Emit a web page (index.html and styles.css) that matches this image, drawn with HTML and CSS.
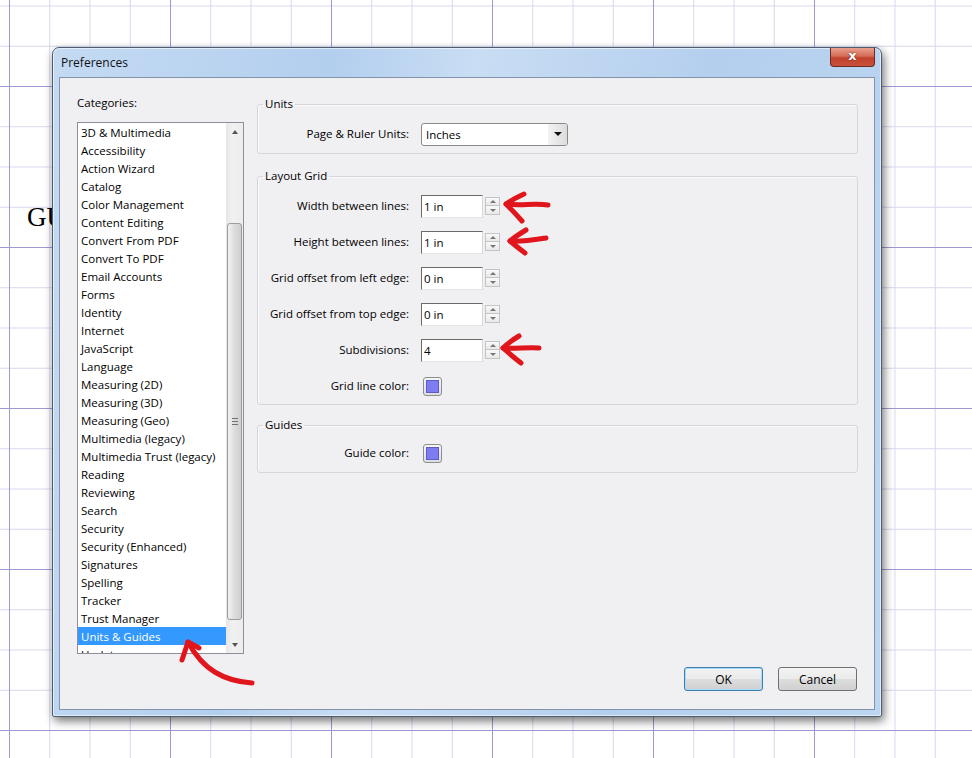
FILE: index.html
```html
<!DOCTYPE html>
<html lang="en">
  <head>
    <meta charset="UTF-8" />
    <link rel="stylesheet" href="styles.css">
    <title>Preferences</title>
  </head>
  <body>
    <div class="desktop">
      <div class="doc-text">GU</div>

      <div class="window">
        <div class="titlebar">
          <span class="title">Preferences</span>
          <div class="close">x</div>
        </div>

        <div class="client">
          <div class="main">
            <div class="categories">
              <div class="cat-label">Categories:</div>
              <div class="listbox">
                <ul class="items">
                  <li>3D &amp; Multimedia</li>
                  <li>Accessibility</li>
                  <li>Action Wizard</li>
                  <li>Catalog</li>
                  <li>Color Management</li>
                  <li>Content Editing</li>
                  <li>Convert From PDF</li>
                  <li>Convert To PDF</li>
                  <li>Email Accounts</li>
                  <li>Forms</li>
                  <li>Identity</li>
                  <li>Internet</li>
                  <li>JavaScript</li>
                  <li>Language</li>
                  <li>Measuring (2D)</li>
                  <li>Measuring (3D)</li>
                  <li>Measuring (Geo)</li>
                  <li>Multimedia (legacy)</li>
                  <li>Multimedia Trust (legacy)</li>
                  <li>Reading</li>
                  <li>Reviewing</li>
                  <li>Search</li>
                  <li>Security</li>
                  <li>Security (Enhanced)</li>
                  <li>Signatures</li>
                  <li>Spelling</li>
                  <li>Tracker</li>
                  <li>Trust Manager</li>
                  <li class="selected">Units &amp; Guides</li>
                  <li>Updater</li>
                </ul>
                <div class="scrollbar">
                  <div class="sb-btn"><span class="tri-up"></span></div>
                  <div class="sb-track">
                    <div class="sb-thumb"><span class="grip"></span></div>
                  </div>
                  <div class="sb-btn"><span class="tri-down"></span></div>
                </div>
              </div>
            </div>

            <div class="panel">
              <fieldset class="group units">
                <legend>Units</legend>
                <div class="row">
                  <label>Page &amp; Ruler Units:</label>
                  <div class="select">
                    <span class="select-text">Inches</span>
                    <span class="select-btn"><span class="tri-down dark"></span></span>
                  </div>
                </div>
              </fieldset>

              <fieldset class="group grid">
                <legend>Layout Grid</legend>
                <div class="row">
                  <label>Width between lines:</label>
                  <div class="field">
                    <span class="input">1 in</span>
                    <span class="spin"><span class="spin-btn"><span class="tri-up small"></span></span><span class="spin-btn"><span class="tri-down small"></span></span></span>
                  </div>
                </div>
                <div class="row">
                  <label>Height between lines:</label>
                  <div class="field">
                    <span class="input">1 in</span>
                    <span class="spin"><span class="spin-btn"><span class="tri-up small"></span></span><span class="spin-btn"><span class="tri-down small"></span></span></span>
                  </div>
                </div>
                <div class="row">
                  <label>Grid offset from left edge:</label>
                  <div class="field">
                    <span class="input">0 in</span>
                    <span class="spin"><span class="spin-btn"><span class="tri-up small"></span></span><span class="spin-btn"><span class="tri-down small"></span></span></span>
                  </div>
                </div>
                <div class="row">
                  <label>Grid offset from top edge:</label>
                  <div class="field">
                    <span class="input">0 in</span>
                    <span class="spin"><span class="spin-btn"><span class="tri-up small"></span></span><span class="spin-btn"><span class="tri-down small"></span></span></span>
                  </div>
                </div>
                <div class="row">
                  <label>Subdivisions:</label>
                  <div class="field">
                    <span class="input">4</span>
                    <span class="spin"><span class="spin-btn"><span class="tri-up small"></span></span><span class="spin-btn"><span class="tri-down small"></span></span></span>
                  </div>
                </div>
                <div class="row">
                  <label>Grid line color:</label>
                  <div class="swatch"><span class="swatch-color"></span></div>
                </div>
              </fieldset>

              <fieldset class="group guides">
                <legend>Guides</legend>
                <div class="row">
                  <label>Guide color:</label>
                  <div class="swatch"><span class="swatch-color"></span></div>
                </div>
              </fieldset>
            </div>
          </div>

          <div class="footer">
            <button class="btn default">OK</button>
            <button class="btn">Cancel</button>
          </div>
        </div>
      </div>

      <!-- hand drawn red marks on top of the screenshot -->
      <svg class="marks" width="972" height="758" viewBox="0 0 972 758">
        <g fill="none" stroke="#e0161c" stroke-width="5" stroke-linecap="round" stroke-linejoin="round">
          <path d="M548 205 C535 203 520 206 506 204" />
          <path d="M524 194 Q513 199 506 204 Q514 212 522 221" />
          <path d="M546 238 C533 240 521 242 510 241" />
          <path d="M526 230 Q516 236 510 241 Q517 247 525 253" />
          <path d="M539 348 C528 347 515 349 503 348" />
          <path d="M519 336 Q509 342 503 348 Q512 356 521 363" />
          <path d="M252 683 C224 681 203 670 188 642" />
          <path d="M182 660 L188 642 L199 648" />
        </g>
      </svg>
    </div>
  </body>
</html>
```

FILE: styles.css
```css
* {
  margin: 0;
  padding: 0;
  box-sizing: border-box;
}

body {
  width: 972px;
  height: 758px;
  overflow: hidden;
  font-family: "Open Sans", "Noto Sans", sans-serif;
  font-size: 11.5px;
  color: #000;
}

.desktop {
  position: relative;
  width: 972px;
  height: 758px;
  background-color: #fff;
  background-image:
    linear-gradient(to right, #9d99d2 1px, transparent 1px),
    linear-gradient(to bottom, #9d99d2 1px, transparent 1px),
    linear-gradient(to right, #d8d6ee 1px, transparent 1px),
    linear-gradient(to bottom, #d8d6ee 1px, transparent 1px);
  background-size: 161px 161px, 161px 161px, 40.25px 40.25px, 40.25px 40.25px;
  background-position: 170px 0, 0 86px, 170px 0, 0 86px;
}

.doc-text {
  position: absolute;
  left: 27px;
  top: 204px;
  font-family: "Liberation Serif", serif;
  font-size: 27px;
  line-height: 27px;
}

/* window */
.window {
  position: absolute;
  left: 52px;
  top: 47px;
  width: 830px;
  height: 670px;
  display: flex;
  flex-direction: column;
  border: 1px solid #4d5d70;
  border-radius: 7px 7px 2px 2px;
  background: linear-gradient(100deg, #c4daf3 0%, #b3cfee 30%, #c9ddf4 45%, #b4cfee 70%, #bcd6f1 100%);
  box-shadow: 2px 4px 10px rgba(0, 0, 0, 0.55), inset 0 0 0 1px rgba(255, 255, 255, 0.55);
}

.titlebar {
  display: flex;
  align-items: flex-start;
  height: 29px;
  padding-left: 8px;
}

.title {
  margin-top: 7px;
  line-height: 16px;
  font-size: 12px;
  color: #111;
}

.close {
  margin-left: auto;
  margin-right: 6px;
  width: 45px;
  height: 19px;
  border: 1px solid #6b2a25;
  border-top: none;
  border-radius: 0 0 4px 4px;
  background: linear-gradient(#e9a08f 0%, #d56c58 45%, #c1412c 55%, #c9503a 100%);
  color: #fff;
  font-family: "DejaVu Sans", sans-serif;
  font-weight: bold;
  font-size: 13px;
  line-height: 16px;
  text-align: center;
  text-shadow: 0 0 2px #6b1b12;
}

.client {
  display: flex;
  flex-direction: column;
  height: 633px;
  margin: 0 6px 6px;
  border: 1px solid #8294ab;
  background: #f0eff2;
}

.main {
  display: flex;
  gap: 13px;
  padding: 17px 16px 0 17px;
}

/* categories list */
.categories {
  width: 167px;
}

.cat-label {
  line-height: 16px;
}

.listbox {
  display: flex;
  height: 532px;
  margin-top: 11px;
  border: 1px solid #8c9099;
  background: #fff;
}

.items {
  flex: 1;
  list-style: none;
  overflow: hidden;
}

.items li {
  height: 18px;
  line-height: 19px;
  padding-left: 3px;
  white-space: nowrap;
}

.items li.selected {
  background: #3399ff;
  color: #fff;
}

.scrollbar {
  display: flex;
  flex-direction: column;
  width: 17px;
  background: linear-gradient(to right, #e6e6e6, #f1f1f1 40%, #ececec);
}

.sb-btn {
  display: flex;
  align-items: center;
  justify-content: center;
  height: 17px;
}

.sb-track {
  flex: 1;
  padding: 83px 1px 0;
}

.sb-thumb {
  display: flex;
  align-items: center;
  justify-content: center;
  height: 397px;
  border: 1px solid #9c9c9c;
  border-radius: 3px;
  background: linear-gradient(to right, #f2f2f2, #dcdcdc 50%, #cfcfcf);
}

.grip {
  width: 6px;
  height: 7px;
  border-top: 1px solid #707070;
  border-bottom: 1px solid #707070;
  background: linear-gradient(#707070, #707070) center / 6px 1px no-repeat;
}

.tri-up {
  width: 0;
  height: 0;
  border-left: 3.5px solid transparent;
  border-right: 3.5px solid transparent;
  border-bottom: 4px solid #555;
}

.tri-down {
  width: 0;
  height: 0;
  border-left: 3.5px solid transparent;
  border-right: 3.5px solid transparent;
  border-top: 4px solid #555;
}

.tri-up.small,
.tri-down.small {
  border-left-width: 3px;
  border-right-width: 3px;
  border-top-color: #777;
  border-bottom-color: #777;
}

.tri-up.small {
  border-bottom-width: 3px;
}

.tri-down.small {
  border-top-width: 3px;
}

.tri-down.dark {
  border-left-width: 4px;
  border-right-width: 4px;
  border-top: 4px solid #111;
}

/* right panel */
.panel {
  width: 601px;
  margin-top: 1px;
}

.group {
  border: 1px solid #d7d5db;
  border-radius: 3px;
  box-shadow: inset 1px 1px 0 #fbfbfc;
  padding: 10px 8px 7px 5px;
}

.group legend {
  padding: 0 2px;
  line-height: 16px;
}

.group.units {
  padding-top: 10px;
  padding-bottom: 8px;
  margin-bottom: 14px;
}

.group.grid {
  display: grid;
  row-gap: 13px;
  margin-bottom: 12px;
}

.group.guides {
  padding-top: 8px;
  padding-bottom: 8px;
}

.row {
  display: grid;
  grid-template-columns: 146px auto;
  column-gap: 12px;
  align-items: center;
  height: 23px;
  line-height: 24px;
}

.row label {
  text-align: right;
  white-space: nowrap;
}

.select {
  display: flex;
  width: 147px;
  height: 23px;
  border: 1px solid #8a8a8a;
  border-radius: 3px;
  background: #fff;
  overflow: hidden;
}

.select-text {
  flex: 1;
  padding-left: 4px;
  line-height: 22px;
}

.select-btn {
  display: flex;
  align-items: center;
  justify-content: center;
  width: 19px;
  background: linear-gradient(to right, #f3f3f3, #dcdcdc);
}

.field {
  display: flex;
  align-items: center;
  gap: 2px;
}

.input {
  width: 62px;
  height: 23px;
  padding-left: 2px;
  line-height: 21px;
  border: 1px solid;
  border-color: #6a6a6a #d8d8d8 #e4e4e4 #6a6a6a;
  background: #fff;
}

.spin {
  display: flex;
  flex-direction: column;
  width: 15px;
  height: 18px;
}

.spin-btn {
  display: flex;
  align-items: center;
  justify-content: center;
  height: 9px;
  border: 1px solid #c2c4c8;
  background: linear-gradient(#f9f9f9, #e9e9ea);
}

.spin-btn + .spin-btn {
  border-top: none;
}

.swatch {
  display: flex;
  align-items: center;
  justify-content: center;
  width: 19px;
  height: 19px;
  margin-left: 2px;
  border: 1px solid #8d8d8d;
  border-radius: 3px;
  background: linear-gradient(#f6f6f6, #dedede);
}

.swatch-color {
  width: 13px;
  height: 13px;
  border: 1px solid #5c5ccb;
  background: #7d7cf0;
}

/* footer buttons */
.footer {
  display: flex;
  justify-content: flex-end;
  gap: 15px;
  margin-top: auto;
  padding: 0 17px 18px 0;
}

.btn {
  width: 79px;
  height: 24px;
  border: 1px solid #707070;
  border-radius: 3px;
  background: linear-gradient(#f3f3f3 0%, #ebebeb 48%, #dddddd 52%, #d0d0d0 100%);
  font-family: inherit;
  font-size: 12px;
  color: #000;
}

.btn.default {
  border-color: #3c7fb1;
  box-shadow: inset 0 0 0 1px #a8dcf6;
}

.marks {
  position: absolute;
  left: 0;
  top: 0;
  pointer-events: none;
}
```
